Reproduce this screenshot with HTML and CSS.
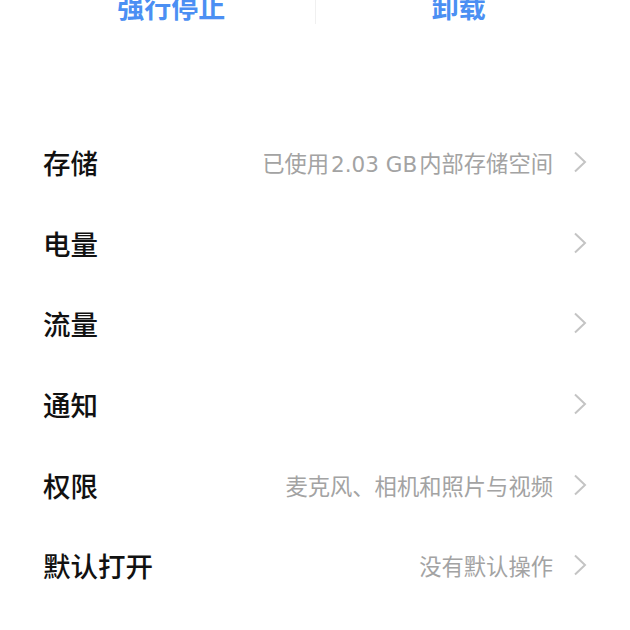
FILE: index.html
```html
<!DOCTYPE html>
<html lang="zh-CN">
<head>
    <meta charset="UTF-8">
    <meta name="viewport" content="width=device-width, initial-scale=1.0">
    <title>应用信息</title>
    <link rel="stylesheet" href="styles.css">
</head>
<body>
    <!-- 顶部操作按钮 -->
    <div class="actions">
        <button class="action">强行停止</button>
        <span class="divider"></span>
        <button class="action">卸载</button>
    </div>

    <!-- 设置列表 -->
    <ul class="list">
        <li class="row">
            <span class="label">存储</span>
            <span class="value">已使用<span class="num">2.03 GB</span>内部存储空间</span>
            <svg class="arrow" viewBox="0 0 14 22"><polyline points="2,1.5 12,11 2,20.5"/></svg>
        </li>
        <li class="row">
            <span class="label">电量</span>
            <span class="value"></span>
            <svg class="arrow" viewBox="0 0 14 22"><polyline points="2,1.5 12,11 2,20.5"/></svg>
        </li>
        <li class="row">
            <span class="label">流量</span>
            <span class="value"></span>
            <svg class="arrow" viewBox="0 0 14 22"><polyline points="2,1.5 12,11 2,20.5"/></svg>
        </li>
        <li class="row">
            <span class="label">通知</span>
            <span class="value"></span>
            <svg class="arrow" viewBox="0 0 14 22"><polyline points="2,1.5 12,11 2,20.5"/></svg>
        </li>
        <li class="row">
            <span class="label">权限</span>
            <span class="value">麦克风、相机和照片与视频</span>
            <svg class="arrow" viewBox="0 0 14 22"><polyline points="2,1.5 12,11 2,20.5"/></svg>
        </li>
        <li class="row">
            <span class="label">默认打开</span>
            <span class="value">没有默认操作</span>
            <svg class="arrow" viewBox="0 0 14 22"><polyline points="2,1.5 12,11 2,20.5"/></svg>
        </li>
    </ul>
</body>
</html>
```

FILE: styles.css
```css
body {
    font-family: "Noto Sans CJK SC", "Noto Sans", sans-serif;
    background-color: #ffffff;
    margin: 0;
    overflow: hidden;
}
.actions {
    display: flex;
    align-items: flex-start;
    padding: 0 28px;
    margin-top: -7px;
}
.action {
    flex: 1;
    border: none;
    background: none;
    padding: 0;
    font-family: inherit;
    font-size: 27px;
    line-height: 27px;
    font-weight: bold;
    color: #4b8ff3;
}
.divider {
    width: 1px;
    height: 31px;
    background-color: #f0f0f0;
}
.list {
    list-style: none;
    margin: 98px 0 0;
    padding: 0;
}
.row {
    display: flex;
    align-items: center;
    height: 80.6px;
    padding: 0 43px;
}
.label {
    font-size: 27.5px;
    font-weight: 500;
    color: #111111;
}
.value {
    flex: 1;
    text-align: right;
    font-size: 22.3px;
    color: #a3a3a3;
    margin-right: 20px;
}
.num {
    font-family: "DejaVu Sans", sans-serif;
    font-size: 21.5px;
    margin: 0 2px;
}
.arrow {
    width: 14px;
    height: 22px;
    fill: none;
    stroke: #c4c4c4;
    stroke-width: 2;
}
```
